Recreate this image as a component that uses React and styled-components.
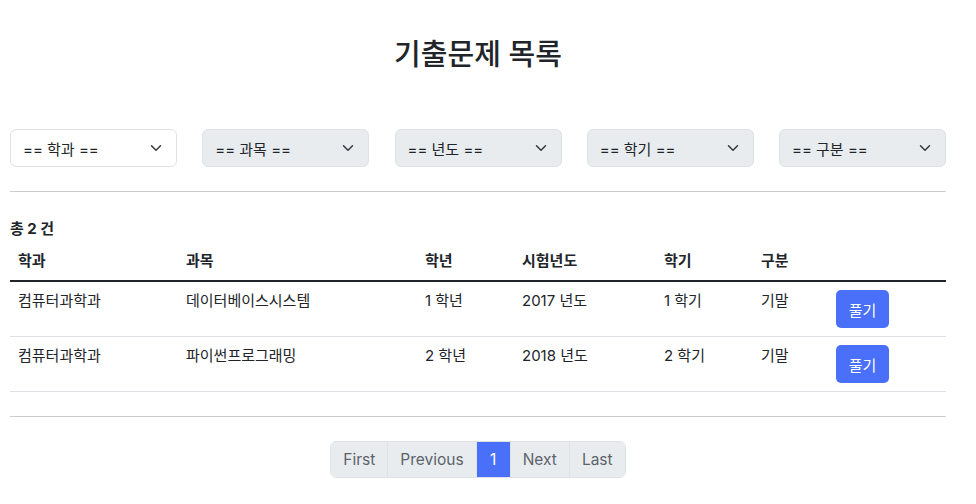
import styled, { createGlobalStyle } from "styled-components";

const GlobalStyle = createGlobalStyle`
  body {
    margin: 0;
    background: #fff;
    color: #212529;
    font-family: Inter, "Noto Sans CJK KR", sans-serif;
  }
`;

const filters = ["== 학과 ==", "== 과목 ==", "== 년도 ==", "== 학기 ==", "== 구분 =="];

const columns = [
  { label: "학과", width: 168 },
  { label: "과목", width: 239 },
  { label: "학년", width: 97 },
  { label: "시험년도", width: 142 },
  { label: "학기", width: 97 },
  { label: "구분", width: 75 },
  { label: "", width: 118 },
];

const rows = [
  { dept: "컴퓨터과학과", subject: "데이터베이스시스템", grade: "1 학년", year: "2017 년도", term: "1 학기", kind: "기말" },
  { dept: "컴퓨터과학과", subject: "파이썬프로그래밍", grade: "2 학년", year: "2018 년도", term: "2 학기", kind: "기말" },
];

const pages = ["First", "Previous", "1", "Next", "Last"];

function App() {
  return (
    <>
      <GlobalStyle />
      <Page>
        <Title>기출문제 목록</Title>
        <FilterRow>
          {filters.map((f, i) => (
            <Select key={f} disabled={i > 0}>
              <span>{f}</span>
              <svg width="12" height="12" viewBox="0 0 16 16">
                <path d="M2 5l6 6 6-6" fill="none" stroke="#343a40" strokeWidth="2" strokeLinecap="round" strokeLinejoin="round" />
              </svg>
            </Select>
          ))}
        </FilterRow>
        <Rule />
        <Count>총 2 건</Count>
        <Table>
          <thead>
            <tr>
              {columns.map((c, i) => (
                <Th key={i} $width={c.width}>
                  {c.label}
                </Th>
              ))}
            </tr>
          </thead>
          <tbody>
            {rows.map((r) => (
              <tr key={r.subject}>
                <td>{r.dept}</td>
                <td>{r.subject}</td>
                <td>{r.grade}</td>
                <td>{r.year}</td>
                <td>{r.term}</td>
                <td>{r.kind}</td>
                <td>
                  <SolveButton>풀기</SolveButton>
                </td>
              </tr>
            ))}
          </tbody>
        </Table>
        <Rule />
        <Pagination>
          {pages.map((p) => (
            <PageItem key={p} $active={p === "1"}>
              {p}
            </PageItem>
          ))}
        </Pagination>
      </Page>
    </>
  );
}

const Page = styled.div`
  width: 936px;
  margin: 0 30px 0 10px;
  display: flex;
  flex-direction: column;
`;

const Title = styled.h2`
  margin: 37px 0 57px;
  text-align: center;
  font-size: 29px;
  line-height: 35px;
  font-weight: 500;
  color: #212529;
`;

const FilterRow = styled.div`
  display: flex;
  justify-content: space-between;
`;

const Select = styled.div`
  box-sizing: border-box;
  width: 167px;
  height: 38px;
  padding: 0 14px 0 12px;
  display: flex;
  align-items: center;
  justify-content: space-between;
  border: 1px solid #dee2e6;
  border-radius: 6px;
  background: ${(p) => (p.disabled ? "#e9ecef" : "#fff")};
  font-size: 15px;
  color: #212529;
`;

const Rule = styled.hr`
  width: 100%;
  margin: 24px 0 0;
  border: 0;
  border-top: 1px solid #ccc;
`;

const Count = styled.div`
  margin-top: 26px;
  font-size: 15px;
  line-height: 21px;
  font-weight: 700;
`;

const Table = styled.table`
  margin-top: 3px;
  width: 100%;
  border-collapse: collapse;
  table-layout: fixed;
  font-size: 15px;
  line-height: 21px;

  td {
    padding: 8px;
    text-align: left;
    vertical-align: top;
    border-bottom: 1px solid #dee2e6;
  }
`;

const Th = styled.th`
  box-sizing: border-box;
  width: ${(p) => p.$width}px;
  padding: 8px 8px 9px;
  text-align: left;
  vertical-align: top;
  font-weight: 700;
  border-bottom: 2px solid #212529;
`;

const SolveButton = styled.button`
  display: block;
  width: 53px;
  height: 38px;
  border: 0;
  border-radius: 5px;
  background: #4a6ff9;
  color: #fff;
  font-family: inherit;
  font-size: 15px;
  cursor: pointer;
`;

const Pagination = styled.div`
  margin: 24px auto 0;
  display: flex;
  border: 1px solid #dee2e6;
  border-radius: 6px;
  overflow: hidden;
`;

const PageItem = styled.span`
  padding: 0 12px;
  min-width: 9px;
  height: 35px;
  display: flex;
  align-items: center;
  justify-content: center;
  font-size: 15.5px;
  background: ${(p) => (p.$active ? "#4a6ff9" : "#e9ecef")};
  color: ${(p) => (p.$active ? "#fff" : "#5c636a")};
  & + & {
    border-left: 1px solid #dee2e6;
  }
`;

export default App;
